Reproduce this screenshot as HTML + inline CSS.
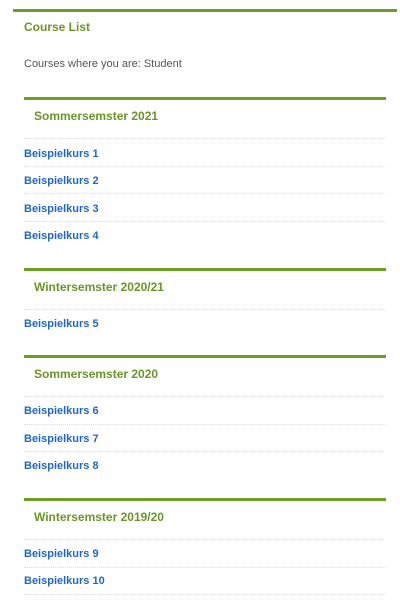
<!DOCTYPE html>
<html><head><meta charset="utf-8"><style>
body{margin:0;width:400px;height:600px;background:#fff;position:relative;overflow:hidden;font-family:"Liberation Sans",sans-serif}
.a{position:absolute;white-space:nowrap;line-height:14px}
.bar{position:absolute;height:3px;background:#6d9f24}
.dv{position:absolute;left:24px;width:362px;border-top:1px dotted #dedede;height:0}
.h{color:#6a9628;font-weight:bold;font-size:12px;left:34px}
.l{color:#1f66cc;font-weight:bold;font-size:11px;left:24px}
</style></head><body>
<div class="bar" style="left:13px;width:384px;top:9px"></div>
<div class="a" style="left:24px;top:20px;color:#6a9628;font-weight:bold;font-size:12px">Course List</div>
<div class="a" style="left:24px;top:57px;color:#555;font-size:11px">Courses where you are: Student</div>

<div class="bar" style="left:24px;width:362px;top:97px"></div>
<div class="a h" style="top:109px">Sommersemster 2021</div>
<div class="dv" style="top:138px"></div>
<div class="a l" style="top:147px">Beispielkurs 1</div>
<div class="dv" style="top:166px"></div>
<div class="a l" style="top:174px">Beispielkurs 2</div>
<div class="dv" style="top:193px"></div>
<div class="a l" style="top:202px">Beispielkurs 3</div>
<div class="dv" style="top:221px"></div>
<div class="a l" style="top:229px">Beispielkurs 4</div>

<div class="bar" style="left:24px;width:362px;top:268px"></div>
<div class="a h" style="top:280px">Wintersemster 2020/21</div>
<div class="dv" style="top:309px"></div>
<div class="a l" style="top:317px">Beispielkurs 5</div>

<div class="bar" style="left:24px;width:362px;top:355px"></div>
<div class="a h" style="top:367px">Sommersemster 2020</div>
<div class="dv" style="top:396px"></div>
<div class="a l" style="top:404px">Beispielkurs 6</div>
<div class="dv" style="top:424px"></div>
<div class="a l" style="top:432px">Beispielkurs 7</div>
<div class="dv" style="top:451px"></div>
<div class="a l" style="top:459px">Beispielkurs 8</div>

<div class="bar" style="left:24px;width:362px;top:498px"></div>
<div class="a h" style="top:510px">Wintersemster 2019/20</div>
<div class="dv" style="top:539px"></div>
<div class="a l" style="top:547px">Beispielkurs 9</div>
<div class="dv" style="top:567px"></div>
<div class="a l" style="top:574px">Beispielkurs 10</div>
<div class="dv" style="top:594px"></div>
</body></html>
